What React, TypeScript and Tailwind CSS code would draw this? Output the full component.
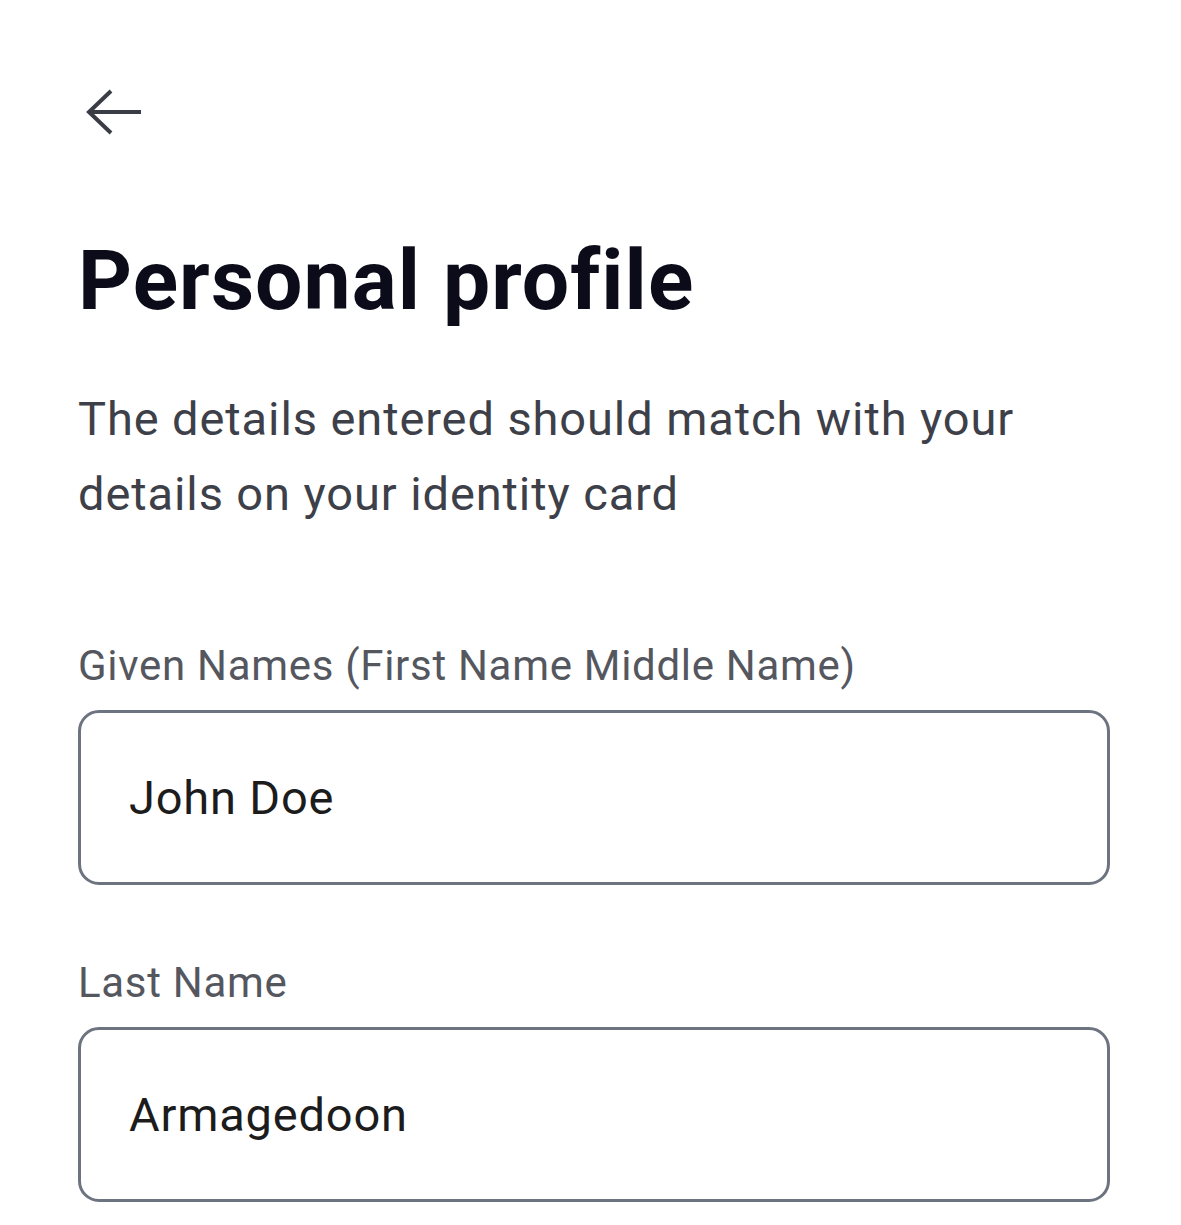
import React from "react";

const fields = [
  { label: "Given Names (First Name Middle Name)", value: "John Doe" },
  { label: "Last Name", value: "Armagedoon" },
];

export default function App() {
  return (
    <div className="min-h-screen bg-white pl-[78px] pr-[71px] pt-[88px] font-['Roboto',sans-serif]">
      <button className="ml-[8px] block" aria-label="Back">
        <svg width="56" height="48" viewBox="86 88 56 48" fill="none">
          <path
            d="M89 112H141 M111 91L89 112L111 133"
            stroke="#3a3d45"
            strokeWidth="4"
          />
        </svg>
      </button>

      <h1 className="mt-[103px] text-[84px] font-bold leading-none tracking-[1.05px] text-[#0b0b1a]">
        Personal profile
      </h1>

      <p className="mt-[58px] text-[47px] leading-[75px] tracking-[0.9px] text-[#3d4048]">
        The details entered should match with your details on your identity card
      </p>

      <div className="mt-[114px] flex flex-col gap-[77px]">
        {fields.map((f) => (
          <div key={f.label} className="flex flex-col">
            <label className="text-[42px] leading-none tracking-[0.7px] text-[#55575f]">
              {f.label}
            </label>
            <div className="mt-[23px] flex h-[175px] items-center rounded-[21px] border-[3px] border-[#6e7380] pl-[48px]">
              <span className="text-[47px] leading-none tracking-[0.8px] text-[#1c1c1c]">
                {f.value}
              </span>
            </div>
          </div>
        ))}
      </div>
    </div>
  );
}
